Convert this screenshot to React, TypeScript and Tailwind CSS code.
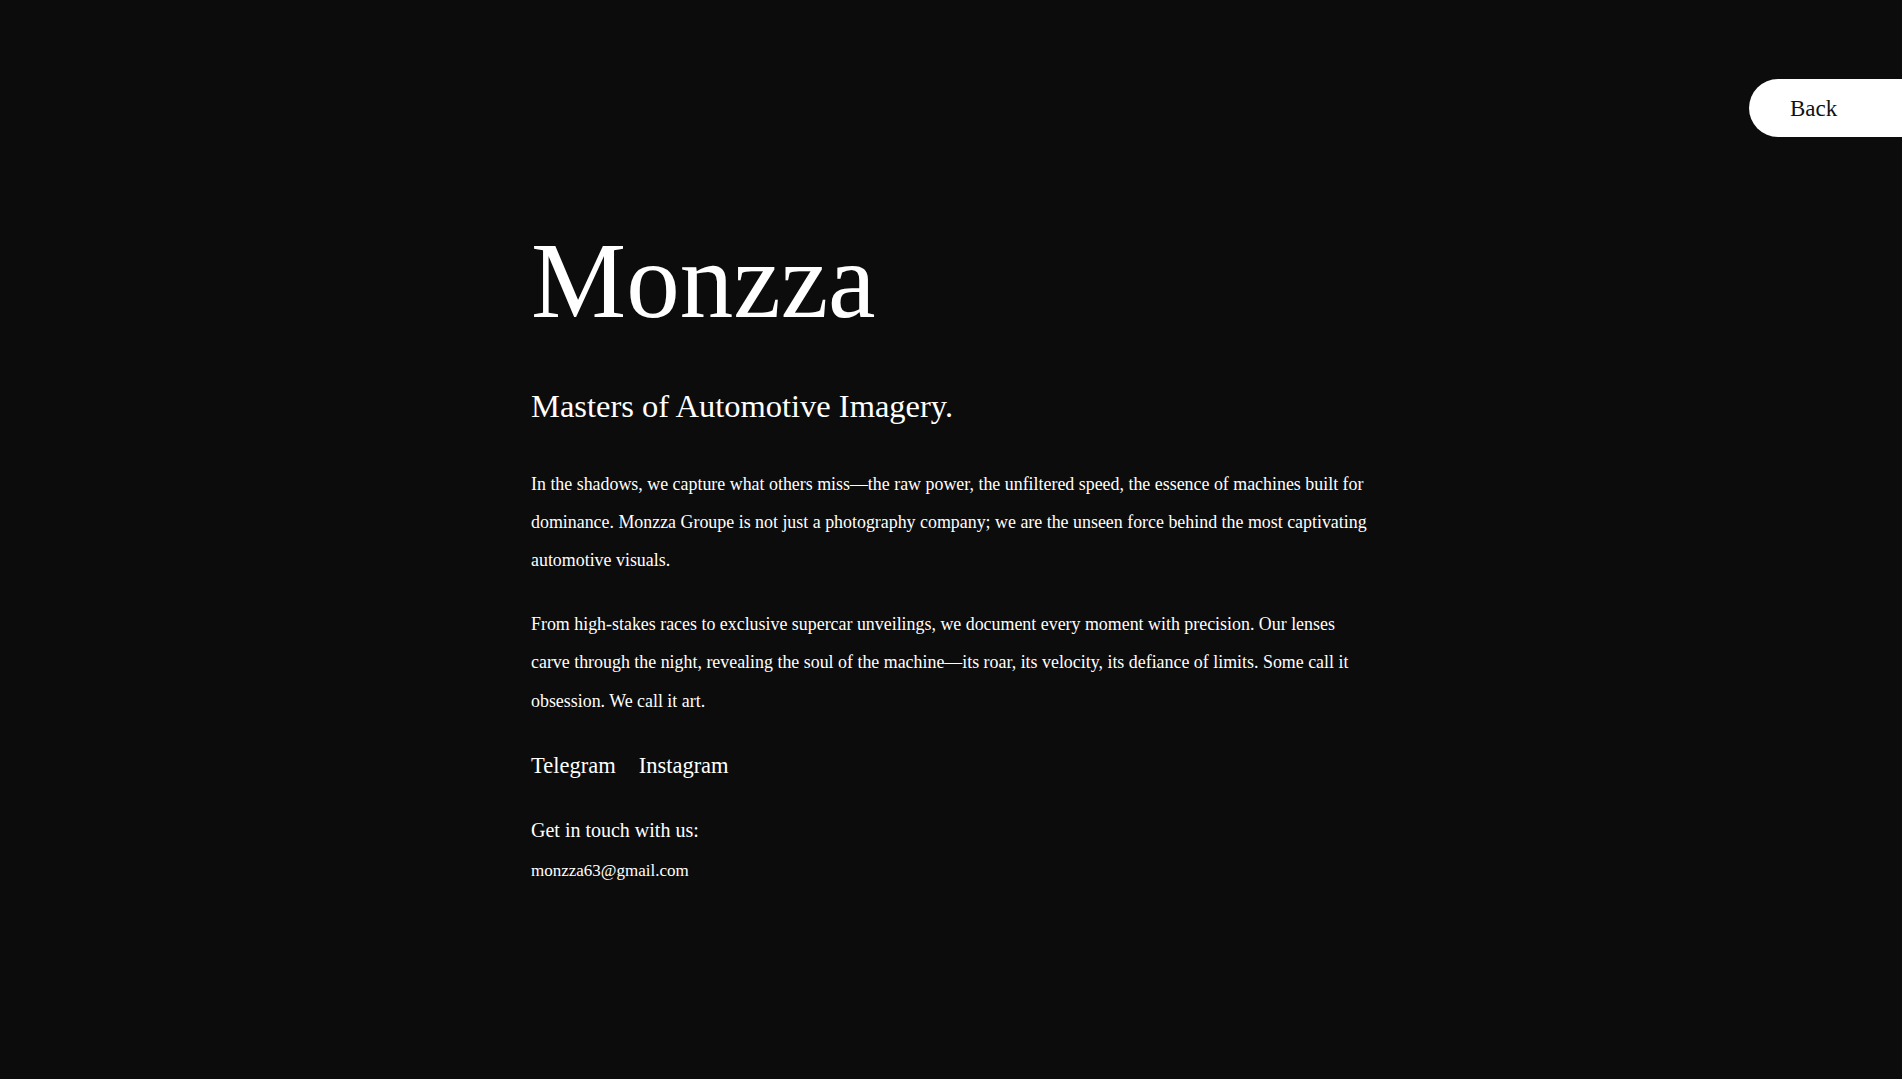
import React from "react";

export default function App() {
  const serif = { fontFamily: '"Liberation Serif", "DejaVu Serif", serif' };
  return (
    <div className="min-h-[1079px] w-full bg-[#0c0c0c] text-white" style={serif}>
      <a
        href="#"
        className="absolute right-0 top-[79px] flex h-[58px] w-[153px] items-center rounded-l-[29px] bg-white pl-[41px] text-[23px] leading-none text-[#111]"
      >
        Back
      </a>
      <main className="mx-auto w-[840px] pt-[228px]">
        <h1 className="text-[107px] font-normal leading-none">Monzza</h1>
        <h2 className="mt-[55px] text-[32.5px] font-normal leading-none">
          Masters of Automotive Imagery.
        </h2>
        <p className="mt-[42px] text-[17.9px] leading-[38.4px]">
          In the shadows, we capture what others miss—the raw power, the unfiltered speed, the
          essence of machines built for dominance. Monzza Groupe is not just a photography
          company; we are the unseen force behind the most captivating automotive visuals.
        </p>
        <p className="mt-[25px] text-[17.9px] leading-[38.4px]">
          From high-stakes races to exclusive supercar unveilings, we document every moment with
          precision. Our lenses carve through the night, revealing the soul of the machine—its
          roar, its velocity, its defiance of limits. Some call it obsession. We call it art.
        </p>
        <div className="mt-[35px] flex gap-[23px] text-[22.5px] leading-none">
          <a href="#">Telegram</a>
          <a href="#">Instagram</a>
        </div>
        <p className="mt-[43px] text-[20px] leading-none">Get in touch with us:</p>
        <p className="mt-[22px] text-[17px] leading-none">monzza63@gmail.com</p>
      </main>
    </div>
  );
}
